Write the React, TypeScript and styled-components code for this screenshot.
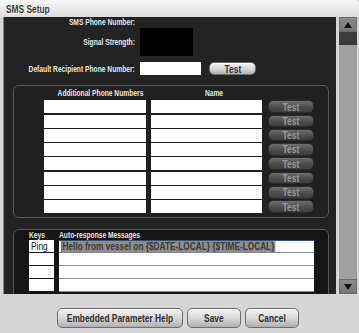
import React from 'react';
import styled, { createGlobalStyle } from 'styled-components';

const SANS = `"Liberation Sans", Arial, sans-serif`;

const GlobalStyle = createGlobalStyle`
  html, body { margin: 0; padding: 0; background: #d5d5d5; }
  body { font-family: ${SANS}; }
  * { box-sizing: border-box; }
`;

/* condensed-face look: Liberation Sans squeezed horizontally */
const Narrow = styled.span<{ $origin?: string }>`
  display: inline-block;
  flex: none;
  white-space: nowrap;
  transform: scaleX(0.76);
  transform-origin: ${(p) => p.$origin || 'center'};
`;

const Window = styled.div`
  width: 359px;
  height: 333px;
  display: flex;
  flex-direction: column;
  background: #d6d6d6;
  overflow: hidden;
`;

const TitleBar = styled.div`
  height: 17px;
  flex: none;
  display: flex;
  align-items: center;
  padding-left: 6px;
  background: linear-gradient(#f7f7f7, #dcdcdc);
  border-top-right-radius: 4px;
  font: bold 11px ${SANS};
  color: #3a3a3a;
  text-shadow: 0 1px 0 #fff;
`;

const Middle = styled.div`
  height: 277px;
  flex: none;
  display: flex;
  padding-left: 3px;
`;

const DarkPanel = styled.div`
  width: 333px;
  background: #232323;
  border-left: 1px solid #8a8a8a;
  overflow: hidden;
  display: flex;
  flex-direction: column;
`;

const ScrollBar = styled.div`
  margin-left: 3px;
  width: 18px;
  display: flex;
  flex-direction: column;
  background: #a0a0a0;
`;

const ScrollButton = styled.div`
  height: 15px;
  flex: none;
  display: flex;
  align-items: center;
  justify-content: center;
  background: linear-gradient(#8c8c8c, #767676);
  border: 1px solid #6c6c6c;
`;

const Thumb = styled.div`
  height: 13px;
  flex: none;
  background: #3b3b3b;
`;

const Track = styled.div`
  flex: 1;
`;

const FieldRow = styled.div<{ $top: number; $h: number }>`
  display: grid;
  grid-template-columns: 131px auto;
  column-gap: 5px;
  align-items: center;
  height: ${(p) => p.$h}px;
  margin-top: ${(p) => p.$top}px;
`;

const Label = styled.div`
  display: flex;
  justify-content: flex-end;
  min-width: 0;
  font: bold 8.8px ${SANS};
  color: #e6e6e6;
`;

const ValueCell = styled.div`
  display: flex;
  align-items: center;
`;

const SignalBox = styled.div`
  width: 53px;
  height: 28px;
  background: #000;
`;

const TextInput = styled.div`
  width: 61px;
  height: 13px;
  background: #fff;
`;

const LightButton = styled.div<{ $w: number; $h: number; $size: number }>`
  width: ${(p) => p.$w}px;
  height: ${(p) => p.$h}px;
  display: flex;
  align-items: center;
  justify-content: center;
  border-radius: 5px;
  border: 1px solid #6d6d6d;
  background: linear-gradient(#f4f4f4 0%, #d9d9d9 50%, #b0b0b0 100%);
  box-shadow: inset 0 1px 0 #fff;
  font: bold ${(p) => p.$size}px ${SANS};
  color: #303030;
`;

const TopTest = styled(LightButton)`
  margin-left: 8px;
`;

const GroupBox = styled.div<{ $top: number; $h: number; $bg: string }>`
  margin: ${(p) => p.$top}px 7px 0 9px;
  height: ${(p) => p.$h}px;
  flex: none;
  border: 1px solid #585858;
  border-radius: 6px;
  background: ${(p) => p.$bg};
`;

const PhoneGrid = styled.div`
  display: grid;
  grid-template-columns: 102px 111px 47px;
  grid-auto-rows: 13px;
  column-gap: 5px;
  row-gap: 1.3px;
  padding-left: 30px;
`;

const HeaderCell = styled.div<{ $shift: number }>`
  height: 14px;
  margin-bottom: 4px;
  display: flex;
  align-items: center;
  justify-content: center;
  padding-left: ${(p) => p.$shift}px;
  font: bold 8.8px ${SANS};
  color: #e6e6e6;
`;

const WhiteCell = styled.div`
  background: #fff;
`;

const DarkTest = styled.div`
  justify-self: end;
  width: 46px;
  height: 12.5px;
  display: flex;
  align-items: center;
  justify-content: center;
  border-radius: 5px;
  border: 1px solid #2c2c2c;
  background: linear-gradient(#6e6e6e, #4a4a4a 60%, #3e3e3e);
  font: bold 11px ${SANS};
  color: #9a9a9a;
`;

const AutoGrid = styled.div`
  display: grid;
  grid-template-columns: 25px 255px;
  column-gap: 5px;
  padding-left: 15px;
`;

const AutoHeader = styled.div`
  height: 10px;
  display: flex;
  align-items: center;
  font: bold 8.8px ${SANS};
  color: #e6e6e6;
`;

const KeyColumn = styled.div`
  display: flex;
  flex-direction: column;
  gap: 1px;
`;

const KeyCell = styled.div`
  height: 12px;
  background: #fff;
  display: flex;
  align-items: center;
  padding-left: 2px;
  font: 11px ${SANS};
  color: #111;
`;

const MessageColumn = styled.div`
  display: flex;
  flex-direction: column;
  background: #fff;
`;

const MessageCell = styled.div<{ $focused?: boolean }>`
  height: 13px;
  display: flex;
  align-items: center;
  padding-left: 2px;
  border-bottom: 1px solid #8a8a8a;
  border-top: ${(p) => (p.$focused ? '1px solid #34506e' : 'none')};
  font: bold 10.9px ${SANS};
  color: #2a2a2a;
`;

const Selected = styled(Narrow)`
  background: #8d8d8d;
  color: #3a3a3a;
  padding: 0 1px;
  line-height: 11px;
  border-left: 1px solid #3c6e9e;
`;

const Footer = styled.div`
  flex: 1;
  display: flex;
  justify-content: center;
  gap: 4px;
  padding: 14px 3px 0 0;
`;

const Triangle = ({ up }: { up: boolean }) => (
  <svg width="8" height="6" viewBox="0 0 8 6">
    <polygon points={up ? '4,0 8,6 0,6' : '0,0 8,0 4,6'} fill="#111" />
  </svg>
);

export default function App() {
  const rows = Array.from({ length: 8 });
  return (
    <>
      <GlobalStyle />
      <Window>
        <TitleBar>
          <Narrow $origin="left">SMS Setup</Narrow>
        </TitleBar>
        <Middle>
          <DarkPanel>
            <FieldRow $top={0} $h={10}>
              <Label><Narrow $origin="right">SMS Phone Number:</Narrow></Label>
              <ValueCell />
            </FieldRow>
            <FieldRow $top={1} $h={28}>
              <Label><Narrow $origin="right">Signal Strength:</Narrow></Label>
              <ValueCell>
                <SignalBox />
              </ValueCell>
            </FieldRow>
            <FieldRow $top={6} $h={13}>
              <Label><Narrow $origin="right">Default Recipient Phone Number:</Narrow></Label>
              <ValueCell>
                <TextInput />
                <TopTest $w={47} $h={13} $size={11}><Narrow>Test</Narrow></TopTest>
              </ValueCell>
            </FieldRow>

            <GroupBox $top={10} $h={133} $bg="#202020">
              <PhoneGrid>
                <HeaderCell $shift={10}><Narrow>Additional Phone Numbers</Narrow></HeaderCell>
                <HeaderCell $shift={15}><Narrow>Name</Narrow></HeaderCell>
                <div />
                {rows.map((_, i) => (
                  <React.Fragment key={i}>
                    <WhiteCell />
                    <WhiteCell />
                    <DarkTest><Narrow>Test</Narrow></DarkTest>
                  </React.Fragment>
                ))}
              </PhoneGrid>
            </GroupBox>

            <GroupBox $top={11} $h={80} $bg="#151515">
              <AutoGrid>
                <AutoHeader><Narrow $origin="left">Keys</Narrow></AutoHeader>
                <AutoHeader><Narrow $origin="left">Auto-response Messages</Narrow></AutoHeader>
                <KeyColumn>
                  <KeyCell><Narrow $origin="left">Ping</Narrow></KeyCell>
                  <KeyCell />
                  <KeyCell />
                  <KeyCell />
                </KeyColumn>
                <MessageColumn>
                  <MessageCell $focused>
                    <Selected $origin="left">Hello from vessel on {'{$DATE-LOCAL}'} {'{$TIME-LOCAL}'}</Selected>
                  </MessageCell>
                  <MessageCell />
                  <MessageCell />
                  <MessageCell />
                </MessageColumn>
              </AutoGrid>
            </GroupBox>
          </DarkPanel>
          <ScrollBar>
            <ScrollButton>
              <Triangle up />
            </ScrollButton>
            <Thumb />
            <Track />
            <ScrollButton>
              <Triangle up={false} />
            </ScrollButton>
          </ScrollBar>
        </Middle>
        <Footer>
          <LightButton $w={126} $h={20} $size={11}><Narrow>Embedded Parameter Help</Narrow></LightButton>
          <LightButton $w={54} $h={20} $size={11}><Narrow>Save</Narrow></LightButton>
          <LightButton $w={54} $h={20} $size={11}><Narrow>Cancel</Narrow></LightButton>
        </Footer>
      </Window>
    </>
  );
}
